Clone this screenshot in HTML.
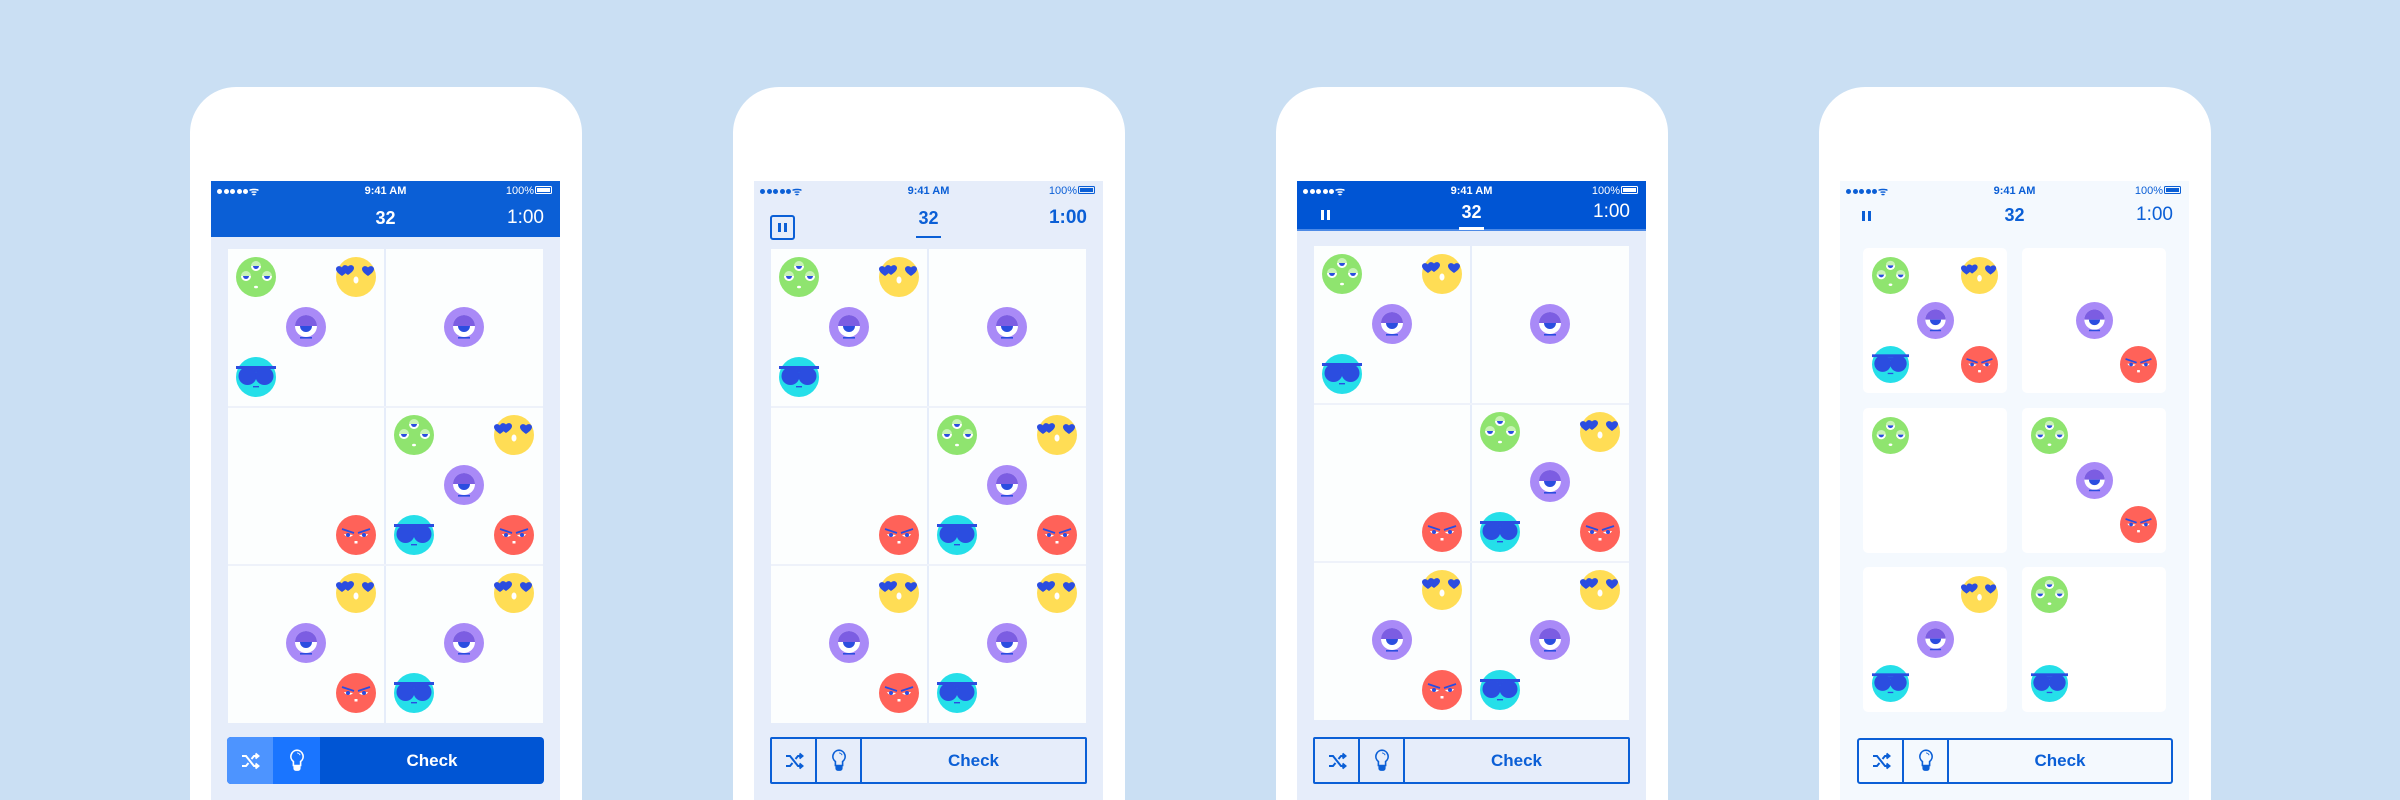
<!DOCTYPE html>
<html><head><meta charset="utf-8">
<style>
*{margin:0;padding:0;box-sizing:border-box}
html,body{width:2400px;height:800px;overflow:hidden}
body{background:#cadff3;position:relative;font-family:"Liberation Sans",sans-serif}
.ph{position:absolute;top:87px;width:392px;height:713px;background:#fff;border-radius:46px 46px 0 0}
.scr{position:absolute;left:21px;top:94px;width:349px;height:619px;background:#e6edfa}
.abs{position:absolute}
.sb{position:absolute;top:0;left:0;width:349px;height:22px;font-size:11px;font-weight:bold}
.sb .t{position:absolute;left:0;width:349px;text-align:center;top:4px}
.sb .p{position:absolute;right:26px;top:4px;font-weight:normal}
.sb .bat{position:absolute;right:8px;top:5px;width:17px;height:8px;border:1.2px solid currentColor;border-radius:1.5px;padding:1px}
.sb .bat i{display:block;width:100%;height:100%;background:currentColor}
.sb .dots{position:absolute;left:6px;top:8px;display:flex;gap:1.5px}
.sb .dots i{width:5px;height:5px;border-radius:50%;background:currentColor}
.num{position:absolute;top:27px;left:0;width:349px;text-align:center;font-size:18px;font-weight:bold}
.tm{position:absolute;top:26px;right:16px;font-size:19px}
.grid{position:absolute;left:17px;top:68px;width:315px;height:474px;background:#fcfefe}
.vl{position:absolute;left:156px;top:0;width:2px;height:474px;background:#e6edfa}
.hl{position:absolute;left:0;width:315px;height:2px;background:#eef2fa}
.btn{position:absolute;left:16px;top:556px;width:317px;height:47px;border-radius:4px;display:flex;overflow:hidden}
.btn div{display:flex;align-items:center;justify-content:center}
.btn .c{flex:1;font-size:17px;font-weight:bold}
.card{position:absolute;width:144px;height:145px;background:#fff;border-radius:5px}
</style></head><body>

<svg width="0" height="0" style="position:absolute">
<defs>
<symbol id="green" viewBox="0 0 40 40">
<circle cx="20" cy="20" r="20" fill="#8fe46f"/>
<g id="ge"><circle cx="20" cy="9" r="5" fill="#c8f3b5"/><path d="M15 9h10a5 5 0 0 1-10 0z" fill="#fff"/><path d="M17 9h6a3 3 0 0 1-6 0z" fill="#2b4de0"/></g>
<use href="#ge" x="-10" y="10"/><use href="#ge" x="11" y="10"/>
<ellipse cx="20" cy="30" rx="2" ry="1.3" fill="#fff"/>
</symbol>
<symbol id="yellow" viewBox="0 0 40 40">
<circle cx="20" cy="20" r="20" fill="#ffdd55"/>
<path id="hh" d="M6 11c0-3 4-4 6-1.5c2-2.5 6-1.5 6 1.5c0 3-4 5.5-6 7c-2-1.5-6-4-6-7z" fill="#2b4de0"/>
<use href="#hh" x="-6" y="1"/><use href="#hh" x="20" y="1"/>
<ellipse cx="20" cy="23" rx="2.5" ry="3.5" fill="#fff"/>
</symbol>
<symbol id="purple" viewBox="0 0 40 40">
<circle cx="20" cy="20" r="20" fill="#a98af7"/>
<circle cx="20" cy="19" r="11" fill="#fff"/>
<path d="M9 19a11 11 0 0 1 22 0z" fill="#7c5de2"/>
<path d="M14 19h12a6 6 0 0 1-12 0z" fill="#2b4de0"/>
<rect x="14" y="30" width="12" height="1.6" fill="#2b4de0"/>
</symbol>
<symbol id="cyan" viewBox="0 0 40 40">
<circle cx="20" cy="20" r="20" fill="#25dfe9"/>
<rect x="0" y="9" width="40" height="3" fill="#2b4de0"/>
<circle cx="11.5" cy="19" r="9" fill="#2b4de0"/><circle cx="28.5" cy="19" r="9" fill="#2b4de0"/>
<path d="M17 12h6l-3 4z" fill="#2b4de0"/>
<rect x="17" y="29" width="6" height="1.4" fill="#2b4de0"/>
</symbol>
<symbol id="red" viewBox="0 0 40 40">
<circle cx="20" cy="20" r="20" fill="#ff6259"/>
<path d="M8 19a5 4 0 0 0 9 1z" fill="#fff"/><path d="M32 19a5 4 0 0 1-9 1z" fill="#fff"/>
<circle cx="12" cy="20" r="2" fill="#2b4de0"/><circle cx="28" cy="20" r="2" fill="#2b4de0"/>
<path d="M6 14l12 4M34 14l-12 4" stroke="#2b4de0" stroke-width="1.8"/>
<rect x="18.5" y="26" width="3" height="2.5" fill="#fff"/>
</symbol>
<symbol id="shuf" viewBox="0 0 20 20">
<path d="M2 5h4l8 10h4M2 15h4l2.5-3M11.5 8l2.5-3h4M15.5 2.5l3 2.5-3 2.5M15.5 12.5l3 2.5-3 2.5" fill="none" stroke="currentColor" stroke-width="2"/>
</symbol>
<symbol id="bulb" viewBox="0 0 20 28">
<path d="M10 2a7 7 0 0 0-4 12.6V19h8v-4.4A7 7 0 0 0 10 2z" fill="none" stroke="currentColor" stroke-width="1.8"/>
<path d="M6 19h8v3a3 3 0 0 1-3 3h-2a3 3 0 0 1-3-3z" fill="currentColor"/>
<path d="M10 5a4 4 0 0 1 3.5 2.5" fill="none" stroke="currentColor" stroke-width="1"/>
</symbol>
</defs></svg>

<!-- Phone 1 -->
<div class="ph" style="left:190px">
<div class="scr">
<div class="abs" style="left:0;top:0;width:349px;height:56px;background:#0b5fd6"></div>
<div class="sb" style="color:#fff"><div class="dots"><i></i><i></i><i></i><i></i><i></i></div><span class="abs" style="left:38px;top:3px;font-size:11px">ᯤ</span><div class="t">9:41 AM</div><div class="p">100%</div><div class="bat"><i></i></div></div>
<div class="num" style="color:#fff">32</div>
<div class="tm" style="color:#fff">1:00</div>
<div class="grid g3"><div class="vl"></div><div class="hl" style="top:157px"></div><div class="hl" style="top:315px"></div></div>
<div class="btn" style="background:#0055d4;color:#fff">
<div style="width:46px;background:#4d94ff"><svg width="20" height="20" style="color:#fff"><use href="#shuf"/></svg></div>
<div style="width:47px;background:#1a75ff"><svg width="18" height="26"><use href="#bulb"/></svg></div>
<div class="c">Check</div></div>
</div></div>

<!-- Phone 2 -->
<div class="ph" style="left:733px">
<div class="scr">
<div class="sb" style="color:#0b5fd6"><div class="dots"><i></i><i></i><i></i><i></i><i></i></div><span class="abs" style="left:38px;top:3px">ᯤ</span><div class="t">9:41 AM</div><div class="p">100%</div><div class="bat"><i></i></div></div>
<div class="abs" style="left:16px;top:34px;width:25px;height:25px;border:2px solid #0b5fd6;border-radius:3px"><i class="abs" style="left:6px;top:6px;width:3px;height:9px;background:#0b5fd6"></i><i class="abs" style="left:12px;top:6px;width:3px;height:9px;background:#0b5fd6"></i></div>
<div class="num" style="color:#0b5fd6">32</div>
<div class="abs" style="left:162px;top:55px;width:25px;height:2px;background:#0b5fd6"></div>
<div class="tm" style="color:#0b5fd6;font-weight:bold">1:00</div>
<div class="grid g3"><div class="vl"></div><div class="hl" style="top:157px"></div><div class="hl" style="top:315px"></div></div>
<div class="btn" style="border:2px solid #0b5fd6;color:#0b5fd6;border-radius:2px">
<div style="width:45px;border-right:2px solid #0b5fd6"><svg width="20" height="20"><use href="#shuf"/></svg></div>
<div style="width:45px;border-right:2px solid #0b5fd6"><svg width="18" height="26"><use href="#bulb"/></svg></div>
<div class="c">Check</div></div>
</div></div>

<!-- Phone 3 -->
<div class="ph" style="left:1276px">
<div class="scr">
<div class="abs" style="left:0;top:0;width:349px;height:48px;background:#0055d4"></div>
<div class="abs" style="left:0;top:48px;width:349px;height:2px;background:#4d8ae6"></div>
<div class="sb" style="color:#fff"><div class="dots"><i></i><i></i><i></i><i></i><i></i></div><span class="abs" style="left:38px;top:3px">ᯤ</span><div class="t">9:41 AM</div><div class="p">100%</div><div class="bat"><i></i></div></div>
<i class="abs" style="left:24px;top:29px;width:3px;height:10px;background:#fff"></i><i class="abs" style="left:30px;top:29px;width:3px;height:10px;background:#fff"></i>
<div class="num" style="color:#fff;top:21px">32</div>
<div class="abs" style="left:162px;top:46px;width:25px;height:3px;background:#fff"></div>
<div class="tm" style="color:#fff;top:20px">1:00</div>
<div class="grid g3" style="top:65px"><div class="vl"></div><div class="hl" style="top:157px"></div><div class="hl" style="top:315px"></div></div>
<div class="btn" style="border:2px solid #0b5fd6;color:#0b5fd6;border-radius:2px">
<div style="width:45px;border-right:2px solid #0b5fd6"><svg width="20" height="20"><use href="#shuf"/></svg></div>
<div style="width:45px;border-right:2px solid #0b5fd6"><svg width="18" height="26"><use href="#bulb"/></svg></div>
<div class="c">Check</div></div>
</div></div>

<!-- Phone 4 -->
<div class="ph" style="left:1819px">
<div class="scr" style="background:#f4f9fe">
<div class="sb" style="color:#0b5fd6"><div class="dots"><i></i><i></i><i></i><i></i><i></i></div><span class="abs" style="left:38px;top:3px">ᯤ</span><div class="t">9:41 AM</div><div class="p">100%</div><div class="bat"><i></i></div></div>
<i class="abs" style="left:22px;top:30px;width:3px;height:10px;background:#0b5fd6"></i><i class="abs" style="left:28px;top:30px;width:3px;height:10px;background:#0b5fd6"></i>
<div class="num" style="color:#0b5fd6;top:24px">32</div>
<div class="tm" style="color:#0b5fd6;top:23px">1:00</div>
<div id="cards"></div>
<div class="btn" style="border:2px solid #0b5fd6;color:#0b5fd6;border-radius:3px;left:17px;top:557px;width:316px;height:46px">
<div style="width:45px;border-right:2px solid #0b5fd6"><svg width="20" height="20"><use href="#shuf"/></svg></div>
<div style="width:45px;border-right:2px solid #0b5fd6"><svg width="18" height="26"><use href="#bulb"/></svg></div>
<div class="c">Check</div></div>
</div></div>

<script>
var N='http://www.w3.org/2000/svg';
function face(par,id,x,y,d){var s=document.createElementNS(N,'svg');s.setAttribute('width',d);s.setAttribute('height',d);s.style.position='absolute';s.style.left=x+'px';s.style.top=y+'px';var u=document.createElementNS(N,'use');u.setAttribute('href','#'+id);s.appendChild(u);par.appendChild(s);}
var cells=[
[['green',0,0],['yellow',2,0],['purple',1,1],['cyan',0,2]],
[['purple',1,1]],
[['red',2,2]],
[['green',0,0],['yellow',2,0],['purple',1,1],['cyan',0,2],['red',2,2]],
[['yellow',2,0],['purple',1,1],['red',2,2]],
[['yellow',2,0],['purple',1,1],['cyan',0,2]]];
document.querySelectorAll('.g3').forEach(function(g){
 cells.forEach(function(c,i){var cx=(i%2)*158,cy=Math.floor(i/2)*158;
  c.forEach(function(f){face(g,f[0],cx+8+f[1]*50,cy+8+f[2]*50,40);});});});
var cards=[
[['green',0,0],['yellow',2,0],['purple',1,1],['cyan',0,2],['red',2,2]],
[['purple',1,1],['red',2,2]],
[['green',0,0]],
[['green',0,0],['purple',1,1],['red',2,2]],
[['yellow',2,0],['purple',1,1],['cyan',0,2]],
[['green',0,0],['cyan',0,2]]];
var host=document.getElementById('cards');
var rows=[67,227,386];
cards.forEach(function(c,i){var d=document.createElement('div');d.className='card';d.style.left=(23+(i%2)*159)+'px';d.style.top=rows[Math.floor(i/2)]+'px';host.appendChild(d);
 c.forEach(function(f){face(d,f[0],9+f[1]*44.5,9+f[2]*44.5,37);});});
</script>
</body></html>
